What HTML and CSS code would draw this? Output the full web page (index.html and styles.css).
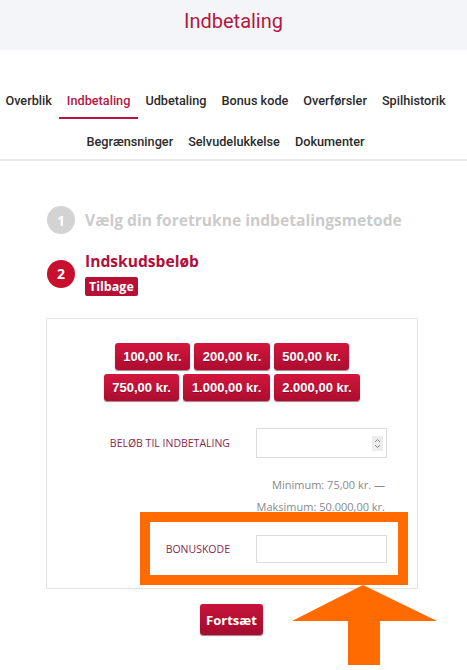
FILE: index.html
```html
<!DOCTYPE html>
<html lang="da">
<head>
<meta charset="utf-8">
<title>Indbetaling</title>
<link rel="stylesheet" href="styles.css">
</head>
<body>
<header class="page-head">
  <h1 class="page-title">Indbetaling</h1>
</header>
<nav class="tabs">
  <div class="tab-row first">
    <a class="tab">Overblik</a>
    <a class="tab active">Indbetaling</a>
    <a class="tab">Udbetaling</a>
    <a class="tab">Bonus kode</a>
    <a class="tab">Overførsler</a>
    <a class="tab">Spilhistorik</a>
  </div>
  <div class="tab-row second">
    <a class="tab">Begrænsninger</a>
    <a class="tab">Selvudelukkelse</a>
    <a class="tab">Dokumenter</a>
  </div>
</nav>
<main class="content">
  <div class="step done">
    <span class="step-num">1</span>
    <span class="step-title">Vælg din foretrukne indbetalingsmetode</span>
  </div>
  <div class="step current">
    <span class="step-num">2</span>
    <div class="step-body">
      <span class="step-title">Indskudsbeløb</span>
      <button class="back-btn">Tilbage</button>
    </div>
  </div>
  <section class="deposit-box">
    <div class="amounts">
      <div class="amount-row">
        <button class="amount">100,00 kr.</button>
        <button class="amount">200,00 kr.</button>
        <button class="amount">500,00 kr.</button>
      </div>
      <div class="amount-row">
        <button class="amount">750,00 kr.</button>
        <button class="amount">1.000,00 kr.</button>
        <button class="amount">2.000,00 kr.</button>
      </div>
    </div>
    <div class="field-row amount-field">
      <label class="field-label">BELØB TIL INDBETALING</label>
      <div class="input number-input"><span class="spinner"><svg width="9" height="13" viewBox="0 0 9 13"><path d="M2 5 L4.5 2.5 L7 5 M2 8 L4.5 10.5 L7 8" fill="none" stroke="#8a8a8a" stroke-width="1"/></svg></span></div>
    </div>
    <div class="limits">
      <p>Minimum: 75,00 kr. —</p>
      <p>Maksimum: 50.000,00 kr.</p>
    </div>
    <div class="field-row bonus-field">
      <label class="field-label">BONUSKODE</label>
      <div class="input"></div>
      <span class="highlight-frame"></span>
      <svg class="highlight-arrow" width="147" height="80" viewBox="0 0 147 80"><polygon points="72,0 146,36 89,36 89,80 57,80 57,36 1,36" fill="#ff6b00"/></svg>
    </div>
  </section>
  <div class="actions">
    <button class="continue-btn">Fortsæt</button>
  </div>
</main>
</body>
</html>
```
FILE: styles.css
```css
* { box-sizing: border-box; }
html, body { margin: 0; padding: 0; background: #fff; }
body {
  font-family: "Open Sans", "Liberation Sans", sans-serif;
  color: #333;
  min-height: 670px;
}
.page-head {
  height: 50px;
  background: #f4f5f9;
  display: flex;
  align-items: center;
  justify-content: center;
}
.page-title {
  margin: 0;
  font-family: "Roboto", "Liberation Sans", sans-serif;
  font-weight: 400;
  font-size: 20px;
  color: #b5173f;
  padding-bottom: 8px;
}
.tabs {
  padding-top: 34px;
  padding-right: 16px;
  border-bottom: 2px solid #e8e8e8;
}
.tab-row {
  display: flex;
  justify-content: center;
  flex-wrap: nowrap;
}
.tab-row.second { margin-top: 6px; }
.tab {
  font-family: "Roboto", "Liberation Sans", sans-serif;
  font-weight: 500;
  font-size: 12.7px;
  line-height: 18px;
  color: #2b2b2b;
  padding: 8px 7.5px 7px;
  border-bottom: 2px solid transparent;
  white-space: nowrap;
}
.tab-row.second .tab { padding: 8px 7.5px 6px; }
.tab.active {
  color: #b5173f;
  border-bottom-color: #b5173f;
}
.content {
  padding: 45px 49px 40px 47px;
}
.step {
  display: flex;
  align-items: center;
  gap: 10px;
}
.step-num {
  flex: none;
  width: 28px;
  height: 28px;
  border-radius: 50%;
  display: flex;
  align-items: center;
  justify-content: center;
  color: #fff;
  font-weight: 700;
  font-size: 14px;
}
.step-title {
  font-weight: 700;
  font-size: 15.6px;
  line-height: 20px;
}
.step.done .step-num { background: #d3d3d3; }
.step.done .step-title { color: #cbcbcb; }
.step.current { margin-top: 17px; }
.step.current .step-num { background: #c8102e; }
.step.current .step-title { color: #b0103a; display: block; }
.step-body {
  display: flex;
  flex-direction: column;
  align-items: flex-start;
  gap: 6px;
}
.back-btn {
  border: 0;
  border-radius: 2px;
  background: #b80f35;
  color: #fff;
  font-family: "Open Sans", sans-serif;
  font-weight: 700;
  font-size: 12.5px;
  line-height: 19px;
  height: 19px;
  padding: 0 4px;
}
.deposit-box {
  margin-top: 22px;
  margin-left: -1px;
  width: 372px;
  border: 1px solid #e4e4e4;
  padding: 24px 0 25px;
}
.amounts {
  display: flex;
  flex-direction: column;
  gap: 4px;
  align-items: center;
}
.amount-row {
  display: flex;
  gap: 4px;
}
.amount {
  height: 27px;
  border: 0;
  border-radius: 3px;
  background: linear-gradient(#d2163d, #ad0d30);
  box-shadow: 0 1px 1px rgba(80, 0, 20, 0.5);
  color: #fff;
  font-family: "Liberation Sans", Arial, sans-serif;
  font-weight: 700;
  font-size: 13px;
  padding: 0 8.5px;
  text-shadow: 0 1px 0 rgba(0, 0, 0, 0.25);
}
.field-row {
  display: grid;
  grid-template-columns: 1fr 131px;
  column-gap: 26px;
  align-items: center;
  padding-right: 30px;
  position: relative;
}
.amount-field { margin-top: 27px; }
.field-label {
  text-align: right;
  font-size: 10.5px;
  color: #8c2450;
}
.input {
  height: 30px;
  border: 1px solid #dcdcdc;
  background: #fff;
  position: relative;
}
.bonus-field .input { height: 28px; }
.spinner {
  position: absolute;
  right: 3px;
  top: 7px;
  width: 11px;
  height: 15px;
  background: #ececec;
  display: flex;
  align-items: center;
  justify-content: center;
}
.limits {
  margin-top: 16px;
  padding-right: 32px;
  text-align: right;
  font-size: 11px;
  line-height: 22px;
  color: #8a8a8a;
}
.limits p { margin: 0; }
.bonus-field { margin-top: 17px; }
.highlight-frame {
  position: absolute;
  left: 93px;
  right: 9px;
  top: -23px;
  bottom: -22px;
  border: 10px solid #ff6b00;
  pointer-events: none;
}
.highlight-arrow {
  position: absolute;
  left: 244px;
  top: 50px;
}
.actions {
  display: flex;
  justify-content: center;
  margin-top: 15px;
  margin-left: -2px;
}
.continue-btn {
  width: 63px;
  height: 31px;
  border: 0;
  border-radius: 3px;
  background: linear-gradient(#c8133a, #a30c2e);
  box-shadow: 0 1px 1px rgba(60, 0, 15, 0.5);
  color: #fff;
  font-family: "Open Sans", sans-serif;
  font-weight: 700;
  font-size: 13px;
  padding: 0;
}
```
